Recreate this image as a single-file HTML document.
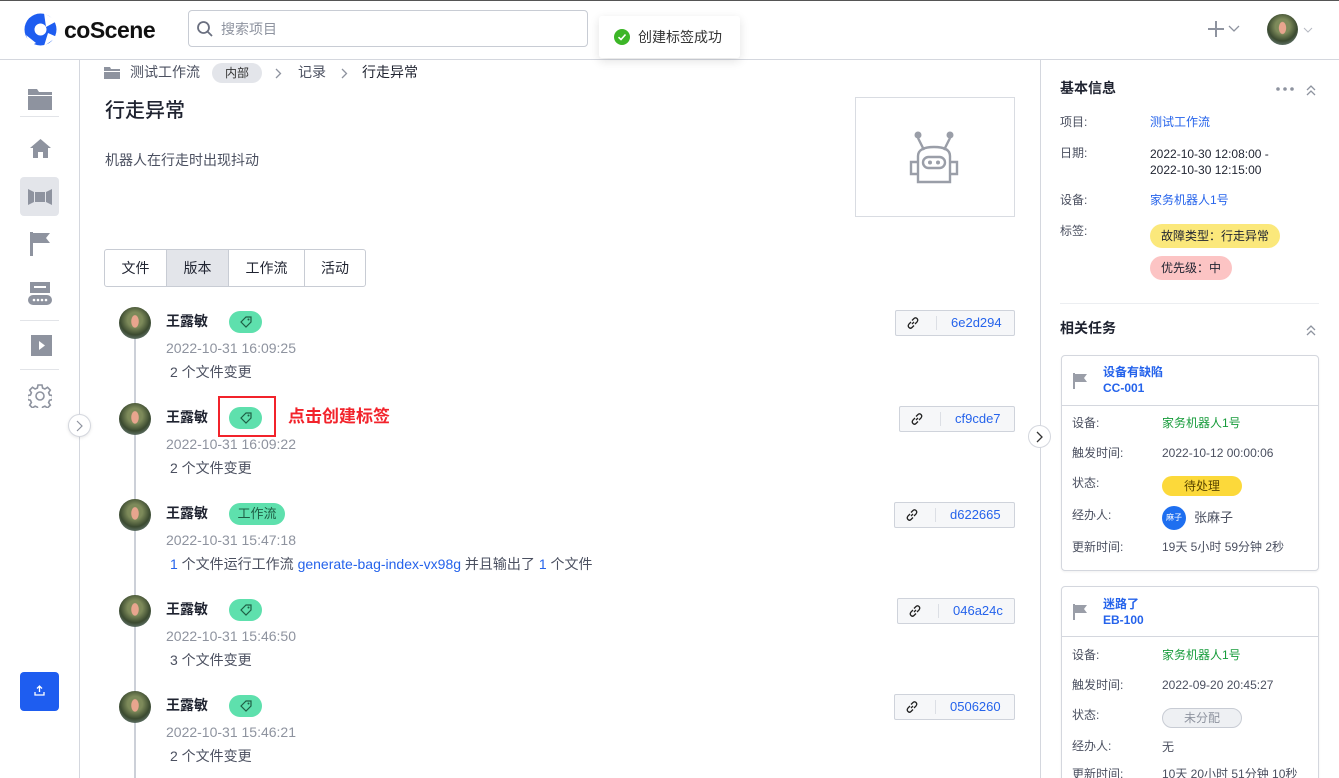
<!DOCTYPE html>
<html><head><meta charset="utf-8"><style>
*{box-sizing:border-box;margin:0;padding:0}
html,body{width:1339px;height:778px;overflow:hidden}
body{background:#fff;font-family:"Liberation Sans","Noto Sans CJK SC",sans-serif;color:#1f2330;position:relative;font-size:13px;line-height:1.25}
.a{position:absolute}
.av{position:absolute;width:32px;height:32px;border-radius:50%;background:radial-gradient(ellipse 18% 30% at 50% 45%,#e8a58e 0 60%,transparent 70%),radial-gradient(circle at 50% 40%,#7d8a5a 0 30%,#3b4a30 60%,#8aa0a8 100%)}
.name{font-size:14px;font-weight:bold;color:#1f2330}
.date{font-size:14px;color:#8e939f}
.chg{font-size:14px;color:#4b5060}
.pill{position:absolute;height:22px;border-radius:11px;background:#5ee0ad;color:#1f5f45;font-size:13px;text-align:center;line-height:22px}
.hash{position:absolute;height:26px;border:1px solid #cfd3db;background:#f6f7f9;border-radius:2px;font-size:13px;color:#2563eb;line-height:24px}
.hash .ic{position:absolute;left:10px;top:5px}
.hash .sep{position:absolute;left:40px;top:5px;width:1px;height:14px;background:#dcdfe5}
.lbl{font-size:12px;color:#4b5060}
.card{position:absolute;left:1061px;width:258px;border:1px solid #d4d7de;border-radius:4px;background:#fff;box-shadow:0 1px 2px rgba(0,0,0,.06);overflow:hidden}
.sb{position:absolute;left:20px;width:39px;height:39px;display:flex;align-items:center;justify-content:center}
</style></head><body>
<div class="a" style="left:0;top:0;width:1339px;height:1px;background:#555"></div>
<div class="a" style="left:0;top:59px;width:1339px;height:1px;background:#d4d7de"></div>
<svg class="a" style="left:24px;top:13px" width="33" height="33" viewBox="0 0 33 33"><circle cx="16.5" cy="16.5" r="16" fill="#1e5df0"/><circle cx="16.5" cy="16.5" r="6" fill="#fff"/><path d="M20 0 L33 8 L22 14Z M33 24 L20 33 L24 20Z M2 22 L12 30 L6 33Z" fill="#fff"/></svg>
<div class="a" style="left:64px;top:16px;font-size:23px;font-weight:bold;letter-spacing:-0.5px;color:#111">coScene</div>
<div class="a" style="left:188px;top:10px;width:400px;height:37px;border:1px solid #c8ccd4;border-radius:4px"></div>
<svg class="a" style="left:196px;top:20px" width="18" height="18" viewBox="0 0 18 18"><circle cx="7.5" cy="7.5" r="5.5" fill="none" stroke="#6b7080" stroke-width="1.8"/><path d="M11.5 11.5L16 16" stroke="#6b7080" stroke-width="1.8"/></svg>
<div class="a" style="left:221px;top:21px;font-size:14px;color:#8e939f">搜索项目</div>
<div class="a" style="left:599px;top:16px;width:141px;height:42px;background:#fff;border-radius:3px;box-shadow:0 3px 10px rgba(0,0,0,.12)"></div>
<svg class="a" style="left:614px;top:29px" width="16" height="16"><circle cx="8" cy="8" r="8" fill="#3cb627"/><path d="M4.5 8.2L7 10.5L11.5 5.5" stroke="#fff" stroke-width="1.6" fill="none"/></svg>
<div class="a" style="left:638px;top:29px;font-size:14px;color:#333">创建标签成功</div>
<svg class="a" style="left:1208px;top:21px" width="16" height="16"><path d="M8 0V16M0 8H16" stroke="#8e939f" stroke-width="2"/></svg>
<svg class="a" style="left:1228px;top:25px" width="12" height="8"><path d="M1 1L6 6L11 1" stroke="#8e939f" fill="none" stroke-width="1.3"/></svg>
<div class="av" style="left:1267px;top:14px;width:31px;height:31px"></div>
<svg class="a" style="left:1303px;top:27px" width="10" height="6"><path d="M1 1L5 5L9 1" stroke="#b5b9c2" fill="none"/></svg>
<!-- sidebar -->
<div class="a" style="left:79px;top:60px;width:1px;height:718px;background:#d4d7de"></div>
<svg class="a" style="left:28px;top:89px" width="24" height="21"><path d="M0 0H9L11 3H24V6H0Z M0 7H24V21H0Z" fill="#8e939f"/></svg>
<div class="a" style="left:20px;top:116px;width:39px;height:1px;background:#e2e4e8"></div>
<svg class="a" style="left:30px;top:139px" width="21" height="19"><path d="M10.5 0L21 9H18V19H13V13H8V19H3V9H0Z" fill="#8e939f"/></svg>
<div class="sb" style="top:177px;background:#e3e5ea;border-radius:4px"><svg width="24" height="16"><path d="M0 0L6 3V13L0 16Z M24 0L18 3V13L24 16Z M7 3H17V13H7Z" fill="#8e939f"/></svg></div>
<svg class="a" style="left:30px;top:232px" width="20" height="24"><path d="M0 0H3V24H0Z M3 1H20L16 6L20 11H3Z" fill="#8e939f"/></svg>
<svg class="a" style="left:28px;top:282px" width="24" height="23"><rect x="2" y="0" width="20" height="11" fill="#8e939f"/><rect x="6" y="4" width="12" height="2" fill="#fff"/><rect x="0" y="13" width="24" height="10" rx="5" fill="#8e939f"/><circle cx="6" cy="18" r="1.3" fill="#fff"/><circle cx="10" cy="18" r="1.3" fill="#fff"/><circle cx="14" cy="18" r="1.3" fill="#fff"/><circle cx="18" cy="18" r="1.3" fill="#fff"/></svg>
<div class="a" style="left:20px;top:320px;width:39px;height:1px;background:#e2e4e8"></div>
<svg class="a" style="left:31px;top:335px" width="21" height="21"><rect width="21" height="21" fill="#8e939f"/><path d="M8 6L14 10.5L8 15Z" fill="#fff"/></svg>
<div class="a" style="left:20px;top:369px;width:39px;height:1px;background:#e2e4e8"></div>
<svg class="a" style="left:28px;top:384px" width="24" height="24" viewBox="0 0 24 24"><path d="M10 1h4l.6 3 2.3 1 2.6-1.7 2.8 2.8-1.7 2.6 1 2.3 3 .6v4l-3 .6-1 2.3 1.7 2.6-2.8 2.8-2.6-1.7-2.3 1-.6 3h-4l-.6-3-2.3-1-2.6 1.7-2.8-2.8 1.7-2.6-1-2.3-3-.6v-4l3-.6 1-2.3-1.7-2.6 2.8-2.8 2.6 1.7 2.3-1z" fill="none" stroke="#8e939f" stroke-width="1.6"/><circle cx="12" cy="12" r="4" fill="none" stroke="#8e939f" stroke-width="1.6"/></svg>
<div class="a" style="left:68px;top:414px;width:23px;height:23px;border-radius:50%;border:1px solid #d4d7de;background:#fff;box-shadow:0 1px 3px rgba(0,0,0,.1)"></div>
<svg class="a" style="left:76px;top:420px" width="8" height="12"><path d="M1 1L6 6L1 11" stroke="#8e939f" fill="none" stroke-width="1.2"/></svg>
<div class="a" style="left:20px;top:672px;width:39px;height:39px;background:#1e5df0;border-radius:4px"></div>
<svg class="a" style="left:34px;top:685px" width="11" height="11"><path d="M5.5 1V7M3 3.5L5.5 1L8 3.5M1 7V10H10V7" stroke="#fff" fill="none" stroke-width="1.3"/></svg>
<!-- main -->
<svg class="a" style="left:104px;top:67px" width="16" height="12"><path d="M0 0H6L7 2H16V4H0Z M0 5H16V12H0Z" fill="#8e939f"/></svg>
<div class="a" style="left:130px;top:64px;font-size:14px;color:#4b5060">测试工作流</div>
<div class="a" style="left:212px;top:63px;width:50px;height:20px;border-radius:10px;background:#e3e5ea;font-size:12px;color:#333;text-align:center;line-height:20px">内部</div>
<svg class="a" style="left:275px;top:68px" width="7" height="11"><path d="M1 1L5.5 5.5L1 10" stroke="#8e939f" fill="none" stroke-width="1.3"/></svg>
<div class="a" style="left:298px;top:64px;font-size:14px;color:#4b5060">记录</div>
<svg class="a" style="left:341px;top:68px" width="7" height="11"><path d="M1 1L5.5 5.5L1 10" stroke="#8e939f" fill="none" stroke-width="1.3"/></svg>
<div class="a" style="left:362px;top:64px;font-size:14px;color:#1f2330">行走异常</div>
<div class="a" style="left:105px;top:99px;font-size:20px;color:#1f2330;font-weight:500">行走异常</div>
<div class="a" style="left:105px;top:152px;font-size:14px;color:#4b5060">机器人在行走时出现抖动</div>
<div class="a" style="left:855px;top:97px;width:160px;height:120px;border:1px solid #d9dce2"></div>
<svg class="a" style="left:906px;top:130px" width="56" height="54" viewBox="0 0 56 54"><g fill="none" stroke="#9a9ea8" stroke-width="2.4"><path d="M12 8L18 20M44 8L38 20"/><path d="M12 52V26Q12 17 28 17Q44 17 44 26V52Z"/><rect x="17" y="27" width="22" height="11" rx="5.5"/><path d="M12 32H5V44H12M44 32H51V44H44"/></g><circle cx="12" cy="5" r="3.5" fill="#9a9ea8"/><circle cx="44" cy="5" r="3.5" fill="#9a9ea8"/><circle cx="24" cy="32.5" r="2" fill="#9a9ea8"/><circle cx="32" cy="32.5" r="2" fill="#9a9ea8"/></svg>
<!-- tabs -->
<div class="a" style="left:104px;top:249px;width:262px;height:38px;border:1px solid #c8ccd4;border-radius:3px;display:flex;font-size:14px;line-height:36px;text-align:center;overflow:hidden">
<div style="width:62px;border-right:1px solid #c8ccd4">文件</div><div style="width:62px;border-right:1px solid #c8ccd4;background:#e3e5ea">版本</div><div style="width:76px;border-right:1px solid #c8ccd4">工作流</div><div style="flex:1">活动</div></div>
<!-- timeline -->
<div class="a" style="left:134px;top:330px;width:2px;height:448px;background:#ccd0d8"></div>

<div class="av" style="left:119px;top:307px"></div>
<div class="a name" style="left:166px;top:313px">王露敏</div>
<div class="pill" style="left:229px;top:311px;width:33px"><svg width="14" height="14" style="margin-top:4px"><path d="M2 7L7 2H12V7L7 12Z" fill="none" stroke="#1f5f45" stroke-width="1.2"/><circle cx="9.5" cy="4.5" r="1" fill="#1f5f45"/></svg></div>
<div class="a date" style="left:166px;top:340px">2022-10-31 16:09:25</div>
<div class="a chg" style="left:170px;top:364px">2 个文件变更</div>
<div class="hash" style="left:895px;top:310px;width:120px"><svg class="ic" width="14" height="14"><path d="M6 8L8 6M5 6L3 8Q1.5 10 3 11.5Q4.5 13 6 11.5L8 9.5M9 8L11 6Q12.5 4 11 2.5Q9.5 1 8 2.5L6 4.5" stroke="#222" fill="none" stroke-width="1.3"/></svg><span class="sep"></span><span style="position:absolute;left:55px">6e2d294</span></div>

<div class="av" style="left:119px;top:403px"></div>
<div class="a name" style="left:166px;top:409px">王露敏</div>
<div class="pill" style="left:229px;top:407px;width:33px"><svg width="14" height="14" style="margin-top:4px"><path d="M2 7L7 2H12V7L7 12Z" fill="none" stroke="#1f5f45" stroke-width="1.2"/><circle cx="9.5" cy="4.5" r="1" fill="#1f5f45"/></svg></div>
<div class="a" style="left:218px;top:396px;width:58px;height:41px;border:2px solid #f2232b"></div>
<div class="a" style="left:288px;top:406px;font-size:17px;font-weight:bold;color:#f2232b">点击创建标签</div>
<div class="a date" style="left:166px;top:436px">2022-10-31 16:09:22</div>
<div class="a chg" style="left:170px;top:460px">2 个文件变更</div>
<div class="hash" style="left:899px;top:406px;width:116px"><svg class="ic" width="14" height="14"><path d="M6 8L8 6M5 6L3 8Q1.5 10 3 11.5Q4.5 13 6 11.5L8 9.5M9 8L11 6Q12.5 4 11 2.5Q9.5 1 8 2.5L6 4.5" stroke="#222" fill="none" stroke-width="1.3"/></svg><span class="sep"></span><span style="position:absolute;left:55px">cf9cde7</span></div>

<div class="av" style="left:119px;top:499px"></div>
<div class="a name" style="left:166px;top:505px">王露敏</div>
<div class="pill" style="left:229px;top:503px;width:56px">工作流</div>
<div class="a date" style="left:166px;top:532px">2022-10-31 15:47:18</div>
<div class="a chg" style="left:170px;top:556px"><span style="color:#2563eb">1</span> 个文件运行工作流 <span style="color:#2563eb">generate-bag-index-vx98g</span> 并且输出了 <span style="color:#2563eb">1</span> 个文件</div>
<div class="hash" style="left:894px;top:502px;width:121px"><svg class="ic" width="14" height="14"><path d="M6 8L8 6M5 6L3 8Q1.5 10 3 11.5Q4.5 13 6 11.5L8 9.5M9 8L11 6Q12.5 4 11 2.5Q9.5 1 8 2.5L6 4.5" stroke="#222" fill="none" stroke-width="1.3"/></svg><span class="sep"></span><span style="position:absolute;left:55px">d622665</span></div>

<div class="av" style="left:119px;top:595px"></div>
<div class="a name" style="left:166px;top:601px">王露敏</div>
<div class="pill" style="left:229px;top:599px;width:33px"><svg width="14" height="14" style="margin-top:4px"><path d="M2 7L7 2H12V7L7 12Z" fill="none" stroke="#1f5f45" stroke-width="1.2"/><circle cx="9.5" cy="4.5" r="1" fill="#1f5f45"/></svg></div>
<div class="a date" style="left:166px;top:628px">2022-10-31 15:46:50</div>
<div class="a chg" style="left:170px;top:652px">3 个文件变更</div>
<div class="hash" style="left:897px;top:598px;width:118px"><svg class="ic" width="14" height="14"><path d="M6 8L8 6M5 6L3 8Q1.5 10 3 11.5Q4.5 13 6 11.5L8 9.5M9 8L11 6Q12.5 4 11 2.5Q9.5 1 8 2.5L6 4.5" stroke="#222" fill="none" stroke-width="1.3"/></svg><span class="sep"></span><span style="position:absolute;left:55px">046a24c</span></div>

<div class="av" style="left:119px;top:691px"></div>
<div class="a name" style="left:166px;top:697px">王露敏</div>
<div class="pill" style="left:229px;top:695px;width:33px"><svg width="14" height="14" style="margin-top:4px"><path d="M2 7L7 2H12V7L7 12Z" fill="none" stroke="#1f5f45" stroke-width="1.2"/><circle cx="9.5" cy="4.5" r="1" fill="#1f5f45"/></svg></div>
<div class="a date" style="left:166px;top:724px">2022-10-31 15:46:21</div>
<div class="a chg" style="left:170px;top:748px">2 个文件变更</div>
<div class="hash" style="left:894px;top:694px;width:121px"><svg class="ic" width="14" height="14"><path d="M6 8L8 6M5 6L3 8Q1.5 10 3 11.5Q4.5 13 6 11.5L8 9.5M9 8L11 6Q12.5 4 11 2.5Q9.5 1 8 2.5L6 4.5" stroke="#222" fill="none" stroke-width="1.3"/></svg><span class="sep"></span><span style="position:absolute;left:55px">0506260</span></div>

<!-- right panel -->
<div class="a" style="left:1040px;top:60px;width:1px;height:718px;background:#d4d7de"></div>
<div class="a" style="left:1028px;top:425px;width:23px;height:23px;border-radius:50%;border:1px solid #d4d7de;background:#fff"></div>
<svg class="a" style="left:1036px;top:431px" width="8" height="12"><path d="M1 1L6 6L1 11" stroke="#333" fill="none" stroke-width="1.3"/></svg>
<div class="a" style="left:1060px;top:80px;font-size:14px;font-weight:bold">基本信息</div>
<svg class="a" style="left:1276px;top:87px" width="18" height="4"><circle cx="2" cy="2" r="1.8" fill="#8e939f"/><circle cx="9" cy="2" r="1.8" fill="#8e939f"/><circle cx="16" cy="2" r="1.8" fill="#8e939f"/></svg>
<svg class="a" style="left:1306px;top:84px" width="10" height="12"><path d="M1 6L5 2L9 6M1 11L5 7L9 11" stroke="#8e939f" fill="none" stroke-width="1.3"/></svg>
<div class="a lbl" style="left:1060px;top:115px">项目:</div>
<div class="a" style="left:1150px;top:115px;font-size:12px;color:#2563eb">测试工作流</div>
<div class="a lbl" style="left:1060px;top:146px">日期:</div>
<div class="a" style="left:1150px;top:146px;font-size:12px;line-height:16px;color:#1f2330">2022-10-30 12:08:00 -<br>2022-10-30 12:15:00</div>
<div class="a lbl" style="left:1060px;top:193px">设备:</div>
<div class="a" style="left:1150px;top:193px;font-size:12px;color:#2563eb">家务机器人1号</div>
<div class="a lbl" style="left:1060px;top:224px">标签:</div>
<div class="a" style="left:1150px;top:224px;height:24px;padding:0 11px;border-radius:12px;background:#fbe87b;font-size:12px;line-height:24px">故障类型：行走异常</div>
<div class="a" style="left:1150px;top:256px;height:24px;padding:0 11px;border-radius:12px;background:#fcc4c4;font-size:12px;line-height:24px">优先级：中</div>
<div class="a" style="left:1060px;top:303px;width:259px;height:1px;background:#eceef1"></div>
<div class="a" style="left:1060px;top:320px;font-size:14px;font-weight:bold">相关任务</div>
<svg class="a" style="left:1306px;top:324px" width="10" height="12"><path d="M1 6L5 2L9 6M1 11L5 7L9 11" stroke="#8e939f" fill="none" stroke-width="1.3"/></svg>

<div class="card" style="top:355px;height:216px">
<svg class="a" style="left:11px;top:17px" width="14" height="16"><path d="M0 0H2V16H0Z M2 1H14L11 5L14 9H2Z" fill="#9a9ea8"/></svg>
<div class="a" style="left:41px;top:8px;font-size:12px;line-height:16px;color:#2563eb;font-weight:bold">设备有缺陷<br>CC-001</div>
<div class="a" style="left:0;top:49px;width:256px;height:1px;background:#d4d7de"></div>
<div class="a lbl" style="left:10px;top:60px">设备:</div><div class="a" style="left:100px;top:60px;font-size:12px;color:#169b3a">家务机器人1号</div>
<div class="a lbl" style="left:10px;top:90px">触发时间:</div><div class="a lbl" style="left:100px;top:90px">2022-10-12 00:00:06</div>
<div class="a lbl" style="left:10px;top:120px">状态:</div><div class="a" style="left:100px;top:120px;width:80px;height:20px;border-radius:10px;background:#fcd93a;font-size:12px;text-align:center;line-height:20px;color:#5a4600">待处理</div>
<div class="a lbl" style="left:10px;top:152px">经办人:</div><div class="a" style="left:100px;top:150px;width:24px;height:24px;border-radius:50%;background:#1e6ff0;color:#fff;font-size:8px;text-align:center;line-height:24px">麻子</div><div class="a lbl" style="left:132px;top:154px;font-size:13px">张麻子</div>
<div class="a lbl" style="left:10px;top:184px">更新时间:</div><div class="a lbl" style="left:100px;top:184px">19天 5小时 59分钟 2秒</div>
</div>

<div class="card" style="top:586px;height:220px">
<svg class="a" style="left:11px;top:17px" width="14" height="16"><path d="M0 0H2V16H0Z M2 1H14L11 5L14 9H2Z" fill="#9a9ea8"/></svg>
<div class="a" style="left:41px;top:9px;font-size:12px;line-height:16px;color:#2563eb;font-weight:bold">迷路了<br>EB-100</div>
<div class="a" style="left:0;top:49px;width:256px;height:1px;background:#d4d7de"></div>
<div class="a lbl" style="left:10px;top:61px">设备:</div><div class="a" style="left:100px;top:61px;font-size:12px;color:#169b3a">家务机器人1号</div>
<div class="a lbl" style="left:10px;top:91px">触发时间:</div><div class="a lbl" style="left:100px;top:91px">2022-09-20 20:45:27</div>
<div class="a lbl" style="left:10px;top:121px">状态:</div><div class="a" style="left:100px;top:121px;width:80px;height:20px;border-radius:10px;background:#eef0f3;border:1px solid #c8ccd4;font-size:12px;text-align:center;line-height:18px;color:#8e939f">未分配</div>
<div class="a lbl" style="left:10px;top:152px">经办人:</div><div class="a lbl" style="left:100px;top:153px">无</div>
<div class="a lbl" style="left:10px;top:180px">更新时间:</div><div class="a lbl" style="left:100px;top:180px">10天 20小时 51分钟 10秒</div>
</div>
</body></html>
